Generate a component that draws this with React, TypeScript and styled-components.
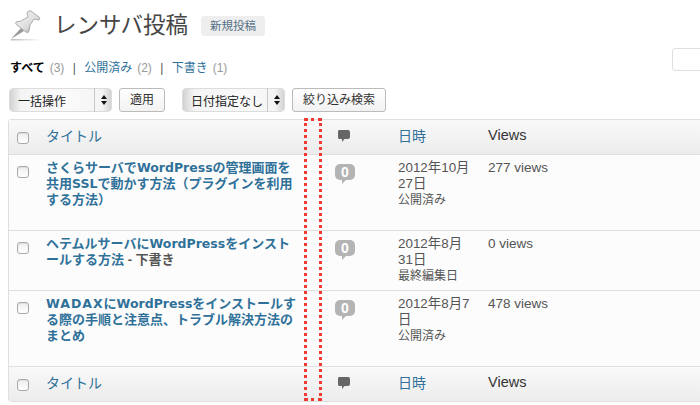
import React from "react"
import styled, { createGlobalStyle } from "styled-components";

const FONT = `"Liberation Sans", "Noto Sans CJK JP", sans-serif`;
const LINK = "#2f7199";

const GlobalStyle = createGlobalStyle`
    html, body {
        margin: 0;
        padding: 0;
        width: 700px;
        height: 405px;
        overflow: hidden;
        background: #fff;
    }
    body {
        font-family: ${FONT};
        color: #333;
    }
`;

const Page = styled.div`
    width: 730px;
    height: 405px;
    box-sizing: border-box;
    padding: 10px 0 0 8px;
    position: relative;
`;

const Heading = styled.div`
    display: flex;
    align-items: center;
    height: 32px;
`;

const PinBox = styled.div`
    width: 46px;
    height: 32px;
    flex: none;
`;

const PageTitle = styled.h2`
    margin: 0;
    font-size: 22.5px;
    line-height: 32px;
    font-weight: 400;
    color: #464646;
`;

const AddNew = styled.a`
    margin-left: 13px;
    margin-top: -1px;
    padding: 0 9px;
    height: 20px;
    line-height: 20px;
    font-size: 11.5px;
    color: #557086;
    background: #eeeeee;
    border-radius: 3px;
`;

const FilterRow = styled.div`
    display: flex;
    justify-content: space-between;
    align-items: flex-end;
    height: 34px;
`;

const SubNav = styled.div`
    font-size: 12px;
    line-height: 16px;
    color: #555;
    padding-left: 2px;
    display: flex;
    gap: 5px;
    white-space: pre;
`;

const NavCurrent = styled.b`
    color: #000;
`;

const NavLink = styled.span`
    color: ${LINK};
`;

const NavCount = styled.span`
    color: #999;
`;

const SearchBox = styled.div`
    width: 60px;
    height: 23px;
    box-sizing: border-box;
    background: #fff;
    border: 1px solid #dfdfdf;
    border-radius: 3px;
    margin-right: -2px;
    margin-bottom: 5px;
`;

const Controls = styled.div`
    display: flex;
    align-items: center;
    height: 24px;
    margin-top: 12px;
    margin-bottom: 7px;
    padding-left: 1px;
`;

const Select = styled.div<{ $width: number; $gapRight: number }>`
    width: ${(p) => p.$width}px;
    margin-right: ${(p) => p.$gapRight}px;
    height: 24px;
    box-sizing: border-box;
    display: flex;
    align-items: center;
    border-radius: 5px;
    font-size: 12px;
    color: #222;
    background: linear-gradient(to right, #cfcfcf 0, #f4f4f4 12px, #fafafa 60%, #f4f4f4 calc(100% - 10px), #cfcfcf 100%);
    box-shadow: inset 0 0 0 1px #dcdcdc;
`;

const SelectLabel = styled.span`
    flex: 1;
    padding-left: 9px;
    white-space: nowrap;
`;

const SelectArrows = styled.span`
    width: 17px;
    align-self: stretch;
    flex: none;
    border-left: 1px solid #c8c8c8;
    display: flex;
    flex-direction: column;
    align-items: center;
    justify-content: center;
    gap: 2px;
`;

const ArrowUp = styled.i`
    width: 0;
    height: 0;
    border-left: 3px solid transparent;
    border-right: 3px solid transparent;
    border-bottom: 4px solid #111;
`;

const ArrowDown = styled.i`
    width: 0;
    height: 0;
    border-left: 3px solid transparent;
    border-right: 3px solid transparent;
    border-top: 4px solid #111;
`;

const Button = styled.div<{ $gapRight?: number }>`
    height: 24px;
    box-sizing: border-box;
    line-height: 22px;
    padding: 0 10px;
    margin-right: ${(p) => p.$gapRight ?? 0}px;
    font-size: 12px;
    color: #333;
    white-space: nowrap;
    background: linear-gradient(to bottom, #fff, #f2f2f2);
    border: 1px solid #bbb;
    border-radius: 3px;
`;

const Table = styled.div`
    width: 722px;
    box-sizing: border-box;
    border: 1px solid #dfdfdf;
    border-radius: 3px;
    background: #fcfcfc;
`;

const Row = styled.div<{ $height: number; $last?: boolean }>`
    display: grid;
    grid-template-columns: 37px 289px 63px 90px 1fr;
    height: ${(p) => p.$height}px;
    box-sizing: border-box;
    border-bottom: ${(p) => (p.$last ? "none" : "1px solid #dfdfdf")};
`;

const HeadRow = styled(Row)`
    align-items: center;
    background: linear-gradient(to bottom, #f9f9f9, #ececec);
`;

const CheckCell = styled.div<{ $top?: boolean }>`
    padding-left: 8px;
    padding-top: ${(p) => (p.$top ? 11 : 1)}px;
`;

const Check = styled.div`
    width: 10px;
    height: 10px;
    border: 1px solid #a9a9a9;
    border-radius: 3px;
    background: linear-gradient(to bottom, #eeeeee, #ffffff);
    box-shadow: inset 0 1px 1px rgba(0, 0, 0, 0.08);
`;

const HeadLink = styled.span`
    font-size: 14px;
    color: ${LINK};
    padding-bottom: 5px;
`;

const HeadPlain = styled.span`
    font-size: 14.5px;
    color: #333;
    padding-bottom: 5px;
`;

const BubbleCell = styled.div`
    padding-left: 2px;
    padding-bottom: 2px;
    display: flex;
    align-items: center;
`;

const PostTitle = styled.div`
    padding-top: 5px;
    font-size: 13px;
    line-height: 16px;
    font-weight: 700;
    color: ${LINK};
    white-space: nowrap;
`;

// the Latin words in the titles run wider than the Japanese around them
const Latin = styled.span<{ $spread?: boolean }>`
    font-family: "DejaVu Sans", sans-serif;
    font-size: 12.5px;
    letter-spacing: ${(p) => (p.$spread ? "1px" : "normal")};
`;

const DraftTag = styled.span`
    color: #555;
`;

const CountCell = styled.div`
    padding-top: 9px;
`;

const CountBubble = styled.div`
    position: relative;
    width: 20px;
    height: 16px;
    border-radius: 5px;
    background: #b4b4b4;
    color: #fff;
    font-size: 14px;
    font-weight: 700;
    line-height: 16px;
    text-align: center;
    &::after {
        content: "";
        position: absolute;
        left: 7px;
        top: 16px;
        border-top: 4px solid #b4b4b4;
        border-right: 4px solid transparent;
    }
`;

const DateCell = styled.div`
    padding-top: 5px;
    font-size: 13.4px;
    line-height: 16px;
    color: #555;
    white-space: nowrap;
`;

const PostStatus = styled.span`
    font-size: 12px;
`;

const ViewsCell = styled.div`
    padding-top: 5px;
    font-size: 13.5px;
    line-height: 16px;
    color: #555;
`;

// red dotted marker laid over the table
const Marker = styled.div`
    position: absolute;
    left: 304px;
    top: 118px;
    width: 18px;
    height: 283px;
    box-sizing: border-box;
    border: 3px dotted #ee3a30;
`;

function Pin() {
    return (
        <svg width="36" height="32" viewBox="0 0 36 32">
            <defs>
                <linearGradient id="pin" x1="0" y1="0" x2="1" y2="1">
                    <stop offset="0" stopColor="#fafafa" />
                    <stop offset="0.6" stopColor="#dcdcdc" />
                    <stop offset="1" stopColor="#8f8f8f" />
                </linearGradient>
                <linearGradient id="pinShadow" x1="0" y1="0" x2="1" y2="0">
                    <stop offset="0" stopColor="#bdbdbd" />
                    <stop offset="1" stopColor="#ffffff" />
                </linearGradient>
            </defs>
            <rect x="3" y="29" width="30" height="1.5" fill="url(#pinShadow)" />
            <path d="M3 29 L13 18 L16 21 Z" fill="#9a9a9a" />
            <path d="M8 12 L13 11 L20 7 L19 3 Q20 0 23 1 L31 7 Q33 10 30 10 L26 9 L22 15 L21 21 Q20 24 18 22 L9 15 Q7 13 8 12 Z" fill="url(#pin)" stroke="#9a9a9a" strokeWidth="0.8" />
        </svg>
    );
}

function CommentIcon() {
    return (
        <svg width="14" height="14" viewBox="0 0 14 14">
            <path d="M2 1 H11 Q13 1 13 3 V8 Q13 10 11 10 H7.5 L5 13 V10 H2 Q1 10 1 8 V3 Q1 1 2 1 Z" fill="#666" />
        </svg>
    );
}

function Head({ last }: { last?: boolean }) {
    return (
        <HeadRow $height={last ? 34 : 35} $last={last}>
            <CheckCell><Check /></CheckCell>
            <HeadLink>タイトル</HeadLink>
            <BubbleCell><CommentIcon /></BubbleCell>
            <HeadLink>日時</HeadLink>
            <HeadPlain>Views</HeadPlain>
        </HeadRow>
    );
}

const POSTS = [
    {
        title: (
            <>
                さくらサーバで<Latin>WordPress</Latin>の管理画面を<br />
                共用<Latin>SSL</Latin>で動かす方法（プラグインを利用<br />
                する方法）
            </>
        ),
        date: ["2012年10月", "27日", "公開済み"],
        views: "277 views",
        height: 76,
    },
    {
        title: (
            <>
                ヘテムルサーバに<Latin>WordPress</Latin>をインスト<br />
                ールする方法<DraftTag> - 下書き</DraftTag>
            </>
        ),
        date: ["2012年8月", "31日", "最終編集日"],
        views: "0 views",
        height: 60,
    },
    {
        title: (
            <>
                <Latin $spread>WADAX</Latin>に<Latin>WordPress</Latin>をインストールす<br />
                る際の手順と注意点、トラブル解決方法の<br />
                まとめ
            </>
        ),
        date: ["2012年8月7", "日", "公開済み"],
        views: "478 views",
        height: 76,
    },
];

export default function App() {
    return (
        <Page>
            <GlobalStyle />
            <Heading>
                <PinBox><Pin /></PinBox>
                <PageTitle>レンサバ投稿</PageTitle>
                <AddNew>新規投稿</AddNew>
            </Heading>
            <FilterRow>
                <SubNav>
                    <NavCurrent>すべて</NavCurrent>
                    <NavCount>(3)</NavCount>
                    <span> | </span>
                    <NavLink>公開済み</NavLink>
                    <NavCount>(2)</NavCount>
                    <span> | </span>
                    <NavLink>下書き</NavLink>
                    <NavCount>(1)</NavCount>
                </SubNav>
                <SearchBox />
            </FilterRow>
            <Controls>
                <Select $width={103} $gapRight={7}>
                    <SelectLabel>一括操作</SelectLabel>
                    <SelectArrows><ArrowUp /><ArrowDown /></SelectArrows>
                </Select>
                <Button $gapRight={17}>適用</Button>
                <Select $width={103} $gapRight={7}>
                    <SelectLabel>日付指定なし</SelectLabel>
                    <SelectArrows><ArrowUp /><ArrowDown /></SelectArrows>
                </Select>
                <Button>絞り込み検索</Button>
            </Controls>
            <Table>
                <Head />
                {POSTS.map((post) => (
                    <Row key={post.views} $height={post.height}>
                        <CheckCell $top><Check /></CheckCell>
                        <PostTitle>{post.title}</PostTitle>
                        <CountCell><CountBubble>0</CountBubble></CountCell>
                        <DateCell>
                            {post.date[0]}<br />{post.date[1]}<br /><PostStatus>{post.date[2]}</PostStatus>
                        </DateCell>
                        <ViewsCell>{post.views}</ViewsCell>
                    </Row>
                ))}
                <Head last />
            </Table>
            <Marker />
        </Page>
    );
}
